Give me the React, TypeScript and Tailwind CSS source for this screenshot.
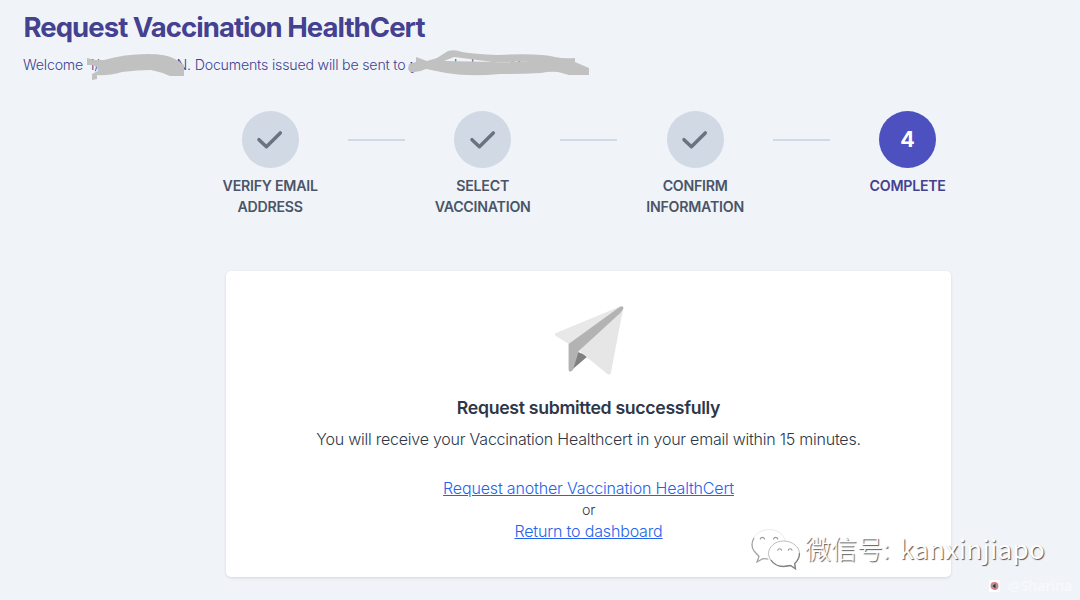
import React from "react";

const steps = [
  { lines: ["VERIFY EMAIL", "ADDRESS"], done: true },
  { lines: ["SELECT", "VACCINATION"], done: true },
  { lines: ["CONFIRM", "INFORMATION"], done: true },
  { lines: ["COMPLETE"], done: false },
];

function Check() {
  return (
    <svg width="28" height="20" viewBox="0 0 28 20" fill="none">
      <path d="M3 9.700 10.400 16.700 24.300 2.900" stroke="#6b7280" strokeWidth="3.500" strokeLinecap="round" strokeLinejoin="round" />
    </svg>
  );
}

function Stepper() {
  return (
    <div className="mt-[37px] ml-[217px] flex h-[160px] items-start">
      {steps.map((step, i) => (
        <React.Fragment key={step.lines[0]}>
          {i > 0 && (
            <div className="flex h-[58px] w-[106.25px] items-center justify-center">
              <div className="h-[2px] w-[57px] bg-[#d0dae5]" />
            </div>
          )}
          <div className="flex w-[106.25px] flex-col items-center whitespace-nowrap">
            <div className={step.done ? "flex size-[57px] items-center justify-center rounded-full bg-[#d1d9e4]" : "flex size-[57px] items-center justify-center rounded-full bg-[#4c51bf]"}>
              {step.done ? <Check /> : <span className="text-[21.5px] font-bold text-white">{i + 1}</span>}
            </div>
            <div className={step.done ? "mt-[7px] text-center text-[14.2px] leading-[21.3px] font-semibold tracking-[-0.25px] text-[#4a5568]" : "mt-[7px] text-center text-[14.2px] leading-[21.3px] font-semibold tracking-[-0.25px] text-[#434190]"}>
              {step.lines.map((line) => (
                <div key={line}>{line}</div>
              ))}
            </div>
          </div>
        </React.Fragment>
      ))}
    </div>
  );
}

function PaperPlane() {
  return (
    <svg width="70" height="72" viewBox="0 0 72 72" preserveAspectRatio="none">
      <path d="M17 66 22 46 35 51Z" fill="#808080" />
      <path d="M69 1 2 28Q0 29.500 2 31L17 40Z" fill="#e8e8e8" />
      <path d="M70 2 26 46 55 69Q57 71 58.500 68L71 4Z" fill="#e6e6e6" />
      <path d="M67.500 2Q71 0 71.500 3Q71 5 67 9L25.500 46 19.500 65Q15 69 15 64V39Z" fill="#b3b3b3" />
    </svg>
  );
}

function Scribbles() {
  return (
    <svg className="absolute top-0 left-0" width="600" height="90" viewBox="0 0 600 90" fill="#c1c1c1">
      <path d="M87 58 95 60 104 60Q124 54 148 54Q166 54 175 59L184 65V76H170Q161 72 151 70Q137 70 122 72Q108 76 97 75V79L92 80V74L98 71 97 67 92 65H87Z" />
      <path fillRule="evenodd" d="M409 64 416 62V57L427 61 437 58 448 51Q455 49 462 52Q474 54 498 55Q540 53 555 57Q564 59 575 58V62L589 68V75H569L558 72Q550 71 541 73Q521 74 500 74Q470 77 446 73L426 69Q418 73 410 72L408 69ZM444 61 496 62Q520 62 530 61Q510 63 493 62L454 57Z" />
    </svg>
  );
}

function Watermark() {
  return (
    <div className="absolute top-[527px] left-[750px] flex items-start">
      <svg width="52" height="44" viewBox="0 0 52 44" fill="none">
        <path d="M19.500 2.500C9.500 2.500 2 9 2 17.500C2 22.500 5 26.500 9 29.500L7.500 35 13 32 20 32.500C30 32.500 36 25.500 36 17.500S29 2.500 19.500 2.500Z" fill="#fff" stroke="#e5e5e5" strokeWidth="0.800" />
        <path d="M4 11Q0 18 4 24L9 29.500 7 35 13 31.500 18 32" stroke="#a0a0a0" strokeWidth="1.200" />
        <path d="M33.500 14C25 14 18.500 20 18.500 26.500S25 39.500 33.500 39.500L40.500 38.500 45.500 41.500 44.500 36.500C47.500 34.500 49.500 31.500 49.500 26.500C49.500 20 42.500 14 33.500 14Z" fill="#fff" stroke="#b5b5b5" strokeWidth="0.900" />
        <path d="M21 33Q25 39.500 33.500 39.500L40.500 38.500 45.500 41.800 44.700 36.500Q49.500 32 49.500 26" stroke="#838383" strokeWidth="1.300" />
        <g stroke="#9b9b9b" strokeWidth="1.200" strokeLinecap="round">
          <path d="M10.300 12a2.200 2.200 0 0 1 4.200 0" />
          <path d="M23.500 12a2.200 2.200 0 0 1 4.200 0" />
          <path d="M27.800 23.200a1.900 1.900 0 0 1 3.700 0" />
          <path d="M38.300 23.200a1.900 1.900 0 0 1 3.700 0" />
        </g>
      </svg>
      <div className="ml-[3px] flex items-baseline whitespace-nowrap leading-[42px] text-white [text-shadow:1px_1px_1px_#555]">
        <span className="font-['Noto_Sans_CJK_SC',sans-serif] text-[26px] font-light">微信号:</span>
        <span className="ml-[10px] font-['Noto_Sans_CJK_SC',sans-serif] text-[26px] tracking-[0.4px]">kanxinjiapo</span>
      </div>
    </div>
  );
}

export default function App() {
  return (
    <div className="relative h-[600px] w-[1080px] overflow-hidden bg-[#f0f4f9] font-[Inter,sans-serif]">
      <h1 className="pt-[9px] pl-[23.5px] text-[27.5px] leading-[36px] font-bold tracking-[-0.95px] text-[#434190]">
        <span className="whitespace-nowrap">Request Vaccination HealthCert</span>
      </h1>
      <div className="mt-[9px] flex h-[20px] pl-[23px] text-[14.2px] leading-[21px] font-[350] tracking-[-0.2px] whitespace-nowrap text-[#434190]">
        <span className="w-[66px]">Welcome</span>
        <span className="w-[87.5px]">1/.</span>
        <span className="w-[233.5px]">N. Documents issued will be sent to</span>
        <span className="w-[44px] font-medium">y</span>
        <span className="w-[17px]">h</span>
        <span className="w-[38px]">k</span>
        <span>@</span>
      </div>
      <Scribbles />
      <Stepper />
      <main className="ml-[226px] flex h-[306px] w-[725px] flex-col items-center rounded-[5px] bg-white pt-[34px] whitespace-nowrap shadow-[0_1px_3px_rgba(0,0,0,0.12)]">
        <PaperPlane />
        <h2 className="mt-[17px] text-[17.7px] leading-[27px] font-semibold tracking-[-0.32px] text-[#2d3748]">Request submitted successfully</h2>
        <p className="mt-[5px] text-[16px] leading-[26px] font-[350] tracking-[-0.23px] text-[#2d3748]">You will receive your Vaccination Healthcert in your email within 15 minutes.</p>
        <a className="mt-[24px] text-[16px] leading-[24px] font-[350] tracking-[-0.16px] text-[#2563eb] underline">Request another Vaccination HealthCert</a>
        <span className="text-[14.2px] leading-[19px] font-[350] tracking-[-0.2px] text-[#2d3748]">or</span>
        <a className="text-[16px] leading-[24px] font-[350] tracking-[-0.16px] text-[#2563eb] underline">Return to dashboard</a>
      </main>
      <Watermark />
      <div className="absolute top-[577px] left-[989px] flex items-center">
        <svg width="11" height="12" viewBox="0 0 11 12">
          <rect width="11" height="12" fill="#fff" />
          <circle cx="5.500" cy="6" r="3.300" fill="#9aa0a8" stroke="#ef7479" strokeWidth="1.300" />
          <path d="m6.500 3.500-3 2.500 3 2.500Z" fill="#333" />
        </svg>
        <span className="ml-[8px] font-['Open_Sans',sans-serif] text-[14px] leading-[18px] font-semibold text-[#f7f9fc]">@Sharina</span>
      </div>
    </div>
  );
}
